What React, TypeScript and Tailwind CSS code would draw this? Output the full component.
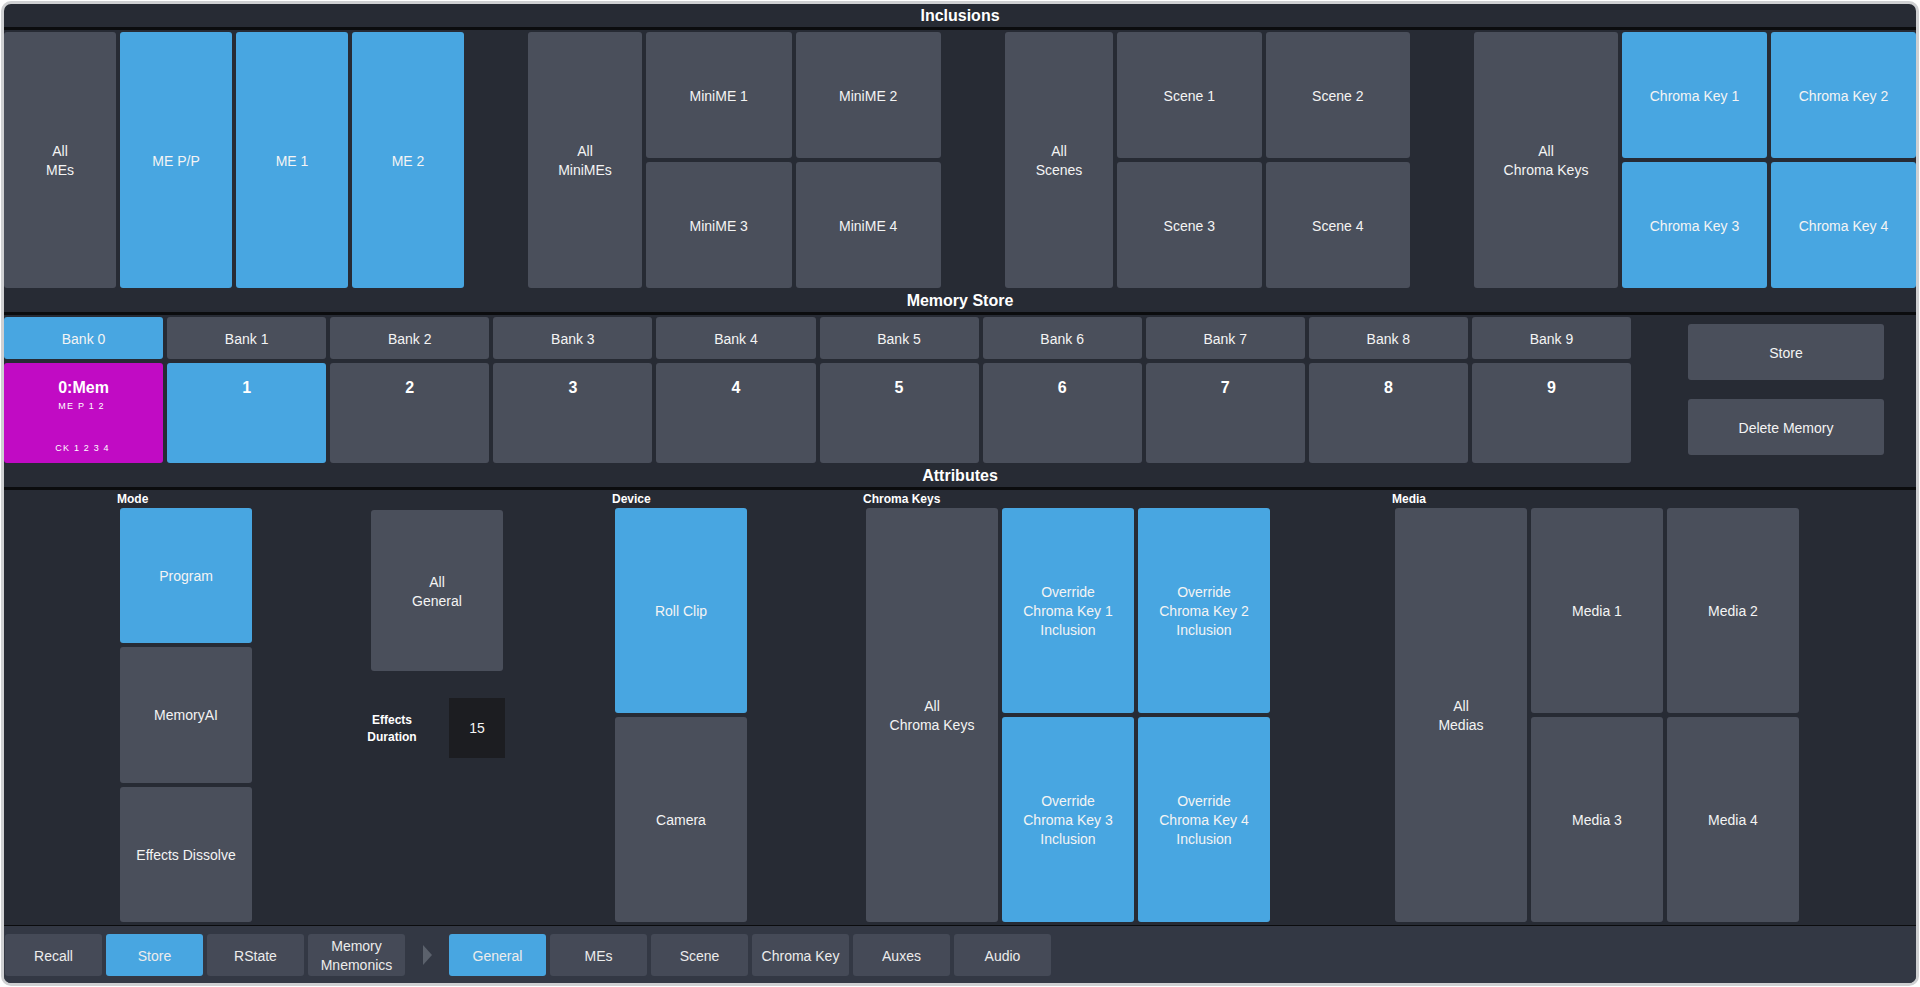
import React from "react";

const GRAY = "bg-[#4a4f5b]";
const BLUE = "bg-[#48a6e1]";

function Btn({
  label,
  active,
  className = "",
}: {
  label: string;
  active?: boolean;
  className?: string;
}) {
  return (
    <div
      className={`${active ? BLUE : GRAY} rounded-[3px] flex items-center justify-center pt-[2px] text-center text-[#f4f4f4] text-[14px] leading-[19px] whitespace-pre-line ${className}`}
    >
      {label}
    </div>
  );
}

function Group3({
  allLabel,
  items,
  firstCol,
  activeItems,
  className = "",
}: {
  allLabel: string;
  items: string[];
  firstCol: string;
  activeItems?: boolean;
  className?: string;
}) {
  return (
    <div className={`grid ${firstCol} grid-rows-2 gap-1 h-full ${className}`}>
      <Btn label={allLabel} className="row-span-2" />
      {items.map((it) => (
        <Btn key={it} label={it} active={activeItems} />
      ))}
    </div>
  );
}

function Title({ text }: { text: string }) {
  return (
    <div className="h-[24px] pt-[1px] flex items-center justify-center text-white font-bold text-[16px] leading-[20px]">
      {text}
    </div>
  );
}

export default function App() {
  const banks = Array.from({ length: 10 }, (_, i) => i);
  return (
    <div
      className="w-[1920px] h-[987px] bg-white pl-[1px] pt-[1px] overflow-hidden"
      style={{ fontFamily: '"Liberation Sans", Arial, sans-serif' }}
    >
      <div className="w-[1918px] h-[985px] border-[3px] border-[#cfd0d2] rounded-[10px] bg-[#272b34] overflow-hidden flex flex-col">
        {/* Inclusions */}
        <div className="h-[23px] pt-[1px] flex items-center justify-center text-white font-bold text-[16px] leading-[20px]">
          Inclusions
        </div>
        <div className="h-[3px] bg-[#0b0c0e]" />
        <div className="mt-[2px] h-[256px] flex gap-[64px]">
          <div className="w-[460px] grid grid-cols-4 gap-1 h-full">
            <Btn label={"All\nMEs"} />
            <Btn label="ME P/P" active />
            <Btn label="ME 1" active />
            <Btn label="ME 2" active />
          </div>
          <Group3
            className="w-[413px]"
            firstCol="grid-cols-[114px_1fr_1fr]"
            allLabel={"All\nMiniMEs"}
            items={["MiniME 1", "MiniME 2", "MiniME 3", "MiniME 4"]}
          />
          <Group3
            className="w-[405px]"
            firstCol="grid-cols-[108px_1fr_1fr]"
            allLabel={"All\nScenes"}
            items={["Scene 1", "Scene 2", "Scene 3", "Scene 4"]}
          />
          <Group3
            className="flex-1"
            firstCol="grid-cols-[144px_1fr_1fr]"
            allLabel={"All\nChroma Keys"}
            items={["Chroma Key 1", "Chroma Key 2", "Chroma Key 3", "Chroma Key 4"]}
            activeItems
          />
        </div>

        {/* Memory Store */}
        <Title text="Memory Store" />
        <div className="h-[3px] bg-[#0b0c0e]" />
        <div className="mt-[2px] h-[146px] flex">
          <div className="w-[1627px] grid grid-cols-10 grid-rows-[42px_100px] gap-1">
            {banks.map((b) => (
              <Btn key={`b${b}`} label={`Bank ${b}`} active={b === 0} />
            ))}
            <div className="bg-[#c10bc4] rounded-[3px] flex flex-col items-center pt-[15px] text-white">
              <div className="text-[16px] font-bold leading-[20px]">0:Mem</div>
              <div className="text-[9px] leading-[12px] tracking-[1.2px] mt-[2px] pr-[4px]">
                ME P 1 2
              </div>
              <div className="text-[9px] leading-[12px] tracking-[1.2px] mt-[30px] pr-[2px]">
                CK 1 2 3 4
              </div>
            </div>
            {banks.slice(1).map((b) => (
              <div
                key={`m${b}`}
                className={`${b === 1 ? BLUE : GRAY} rounded-[3px] flex justify-center pt-[15px] text-white text-[16px] font-bold leading-[20px]`}
              >
                {b}
              </div>
            ))}
          </div>
          <div className="ml-[57px] w-[196px] pt-[7px] flex flex-col gap-[19px]">
            <Btn label="Store" className="h-[56px]" />
            <Btn label="Delete Memory" className="h-[56px]" />
          </div>
        </div>

        {/* Attributes */}
        <Title text="Attributes" />
        <div className="h-[3px] bg-[#0b0c0e]" />
        <div className="h-[435px] flex items-start">
          {/* Mode */}
          <div className="ml-[113px] flex flex-col">
            <div className="h-[18px] leading-[18px] text-[12px] font-bold text-white">Mode</div>
            <div className="ml-[3px] w-[132px] h-[414px] grid grid-rows-3 gap-1">
              <Btn label="Program" active />
              <Btn label="MemoryAI" />
              <Btn label="Effects Dissolve" />
            </div>
          </div>
          {/* General */}
          <div className="ml-[119px] w-[134px] pt-[20px] flex flex-col">
            <Btn label={"All\nGeneral"} className="w-[132px] h-[161px]" />
            <div className="mt-[27px] flex items-center">
              <div className="-ml-[4px] w-[50px] pt-[1px] text-center text-white text-[12px] font-bold leading-[17px]">
                Effects
                <br />
                Duration
              </div>
              <div className="ml-[32px] w-[56px] h-[60px] bg-[#1c1d21] flex items-center justify-center text-[#f4f4f4] text-[14px]">
                15
              </div>
            </div>
          </div>
          {/* Device */}
          <div className="ml-[107px] flex flex-col">
            <div className="h-[18px] leading-[18px] text-[12px] font-bold text-white">Device</div>
            <div className="ml-[3px] w-[132px] h-[414px] grid grid-rows-2 gap-1">
              <Btn label="Roll Clip" active />
              <Btn label="Camera" />
            </div>
          </div>
          {/* Chroma Keys */}
          <div className="ml-[116px] flex flex-col">
            <div className="h-[18px] leading-[18px] text-[12px] font-bold text-white">Chroma Keys</div>
            <div className="ml-[3px] w-[404px] h-[414px] grid grid-cols-3 grid-rows-2 gap-1">
              <Btn label={"All\nChroma Keys"} className="row-span-2" />
              <Btn label={"Override\nChroma Key 1\nInclusion"} active />
              <Btn label={"Override\nChroma Key 2\nInclusion"} active />
              <Btn label={"Override\nChroma Key 3\nInclusion"} active />
              <Btn label={"Override\nChroma Key 4\nInclusion"} active />
            </div>
          </div>
          {/* Media */}
          <div className="ml-[122px] flex flex-col">
            <div className="h-[18px] leading-[18px] text-[12px] font-bold text-white">Media</div>
            <div className="ml-[3px] w-[404px] h-[414px] grid grid-cols-3 grid-rows-2 gap-1">
              <Btn label={"All\nMedias"} className="row-span-2" />
              <Btn label="Media 1" />
              <Btn label="Media 2" />
              <Btn label="Media 3" />
              <Btn label="Media 4" />
            </div>
          </div>
        </div>
        <div className="h-[1px] bg-[#0b0c0e]" />

        {/* Bottom bar */}
        <div className="flex-1 bg-[#333844] pt-[8px] pl-[1px] flex gap-1 items-start">
          {[
            { l: "Recall" },
            { l: "Store", a: true },
            { l: "RState" },
            { l: "Memory\nMnemonics" },
          ].map((b) => (
            <div
              key={b.l}
              className={`${b.a ? BLUE : "bg-[#454a57]"} w-[97px] h-[42px] rounded-[3px] flex items-center justify-center pt-[2px] text-center text-[#ececec] text-[14px] leading-[19px] whitespace-pre-line`}
            >
              {b.l}
            </div>
          ))}
          <div className="w-[36px] h-[42px] flex items-center justify-center">
            <svg width="9" height="20" viewBox="0 0 9 20">
              <polygon points="0,0 9,10 0,20" fill="#5b616c" />
            </svg>
          </div>
          {[
            { l: "General", a: true },
            { l: "MEs" },
            { l: "Scene" },
            { l: "Chroma Key" },
            { l: "Auxes" },
            { l: "Audio" },
          ].map((b) => (
            <div
              key={b.l}
              className={`${b.a ? BLUE : "bg-[#454a57]"} w-[97px] h-[42px] rounded-[3px] flex items-center justify-center pt-[2px] text-center text-[#ececec] text-[14px] leading-[19px]`}
            >
              {b.l}
            </div>
          ))}
        </div>
      </div>
    </div>
  );
}
